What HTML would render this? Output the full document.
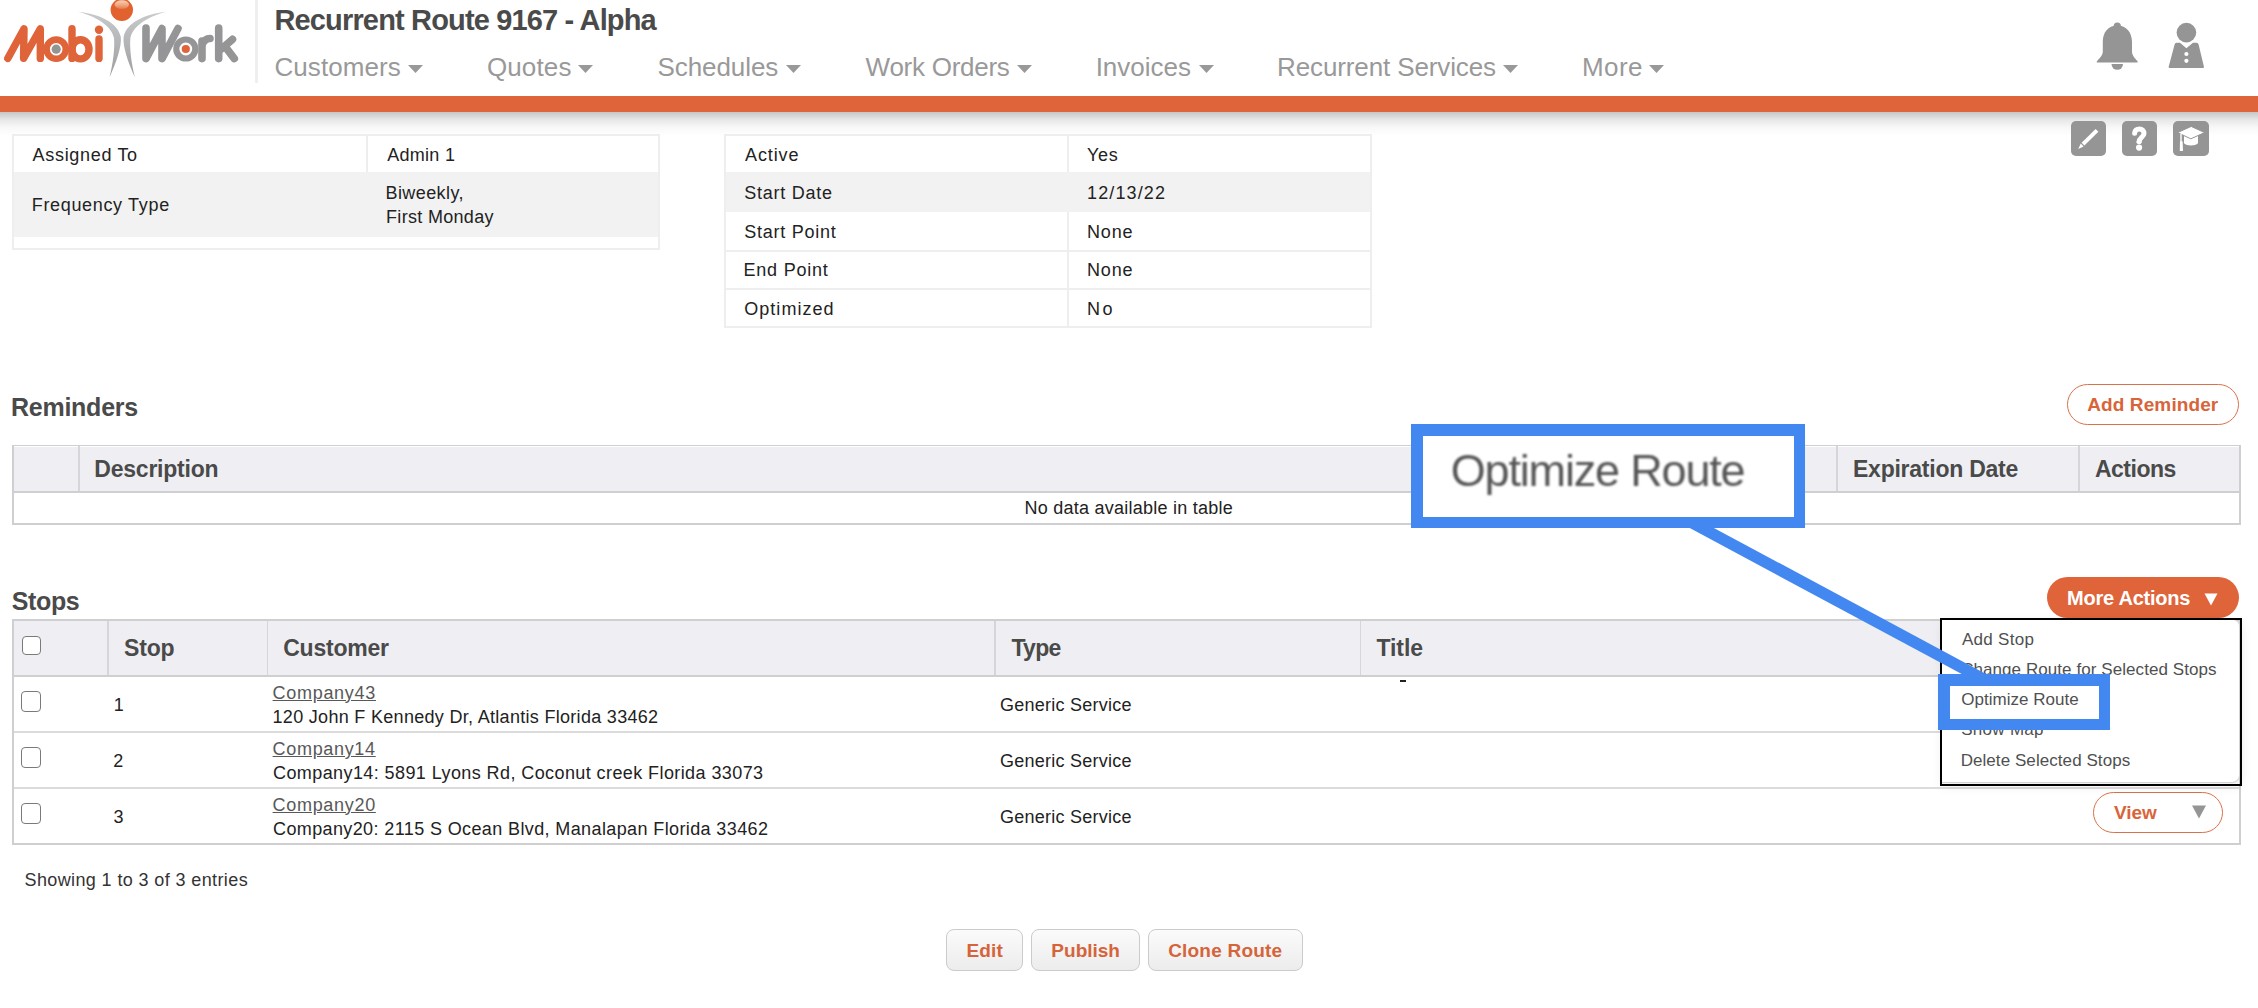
<!DOCTYPE html>
<html><head><meta charset="utf-8">
<style>
html,body{margin:0;padding:0;}
body{width:2258px;height:1008px;position:relative;overflow:hidden;background:#fff;font-family:"Liberation Sans",sans-serif;}
.t{position:absolute;white-space:nowrap;}
.nav{font-size:26px;line-height:26px;color:#999;}
.caret{display:inline-block;width:0;height:0;border-left:7.5px solid transparent;border-right:7.5px solid transparent;border-top:8px solid #999;margin-left:8px;vertical-align:3px;}
</style></head><body>
<svg style="position:absolute;left:0;top:0" width="255" height="90" viewBox="0 0 255 90">
<defs>
<linearGradient id="arm" x1="0" y1="0" x2="0" y2="1"><stop offset="0" stop-color="#c9cacc"/><stop offset="0.5" stop-color="#b3b4b6"/><stop offset="1" stop-color="#9c9d9f"/></linearGradient>
<linearGradient id="hl" x1="0" y1="0" x2="0" y2="1"><stop offset="0" stop-color="#f7d2b8"/><stop offset="0.6" stop-color="#f0a27a"/><stop offset="1" stop-color="#e8784a"/></linearGradient>
<radialGradient id="head" cx="0.5" cy="0.3" r="0.7"><stop offset="0" stop-color="#f2a27a"/><stop offset="0.45" stop-color="#e66a3c"/><stop offset="1" stop-color="#dc5f32"/></radialGradient>
</defs>
<g fill="none" stroke="#e0643a" stroke-width="7.4" stroke-linecap="round" stroke-linejoin="round">
<path d="M7.8,58.4 L24,28.8 L23.6,58.4 L40.3,28.8 L40.3,58.4"/>
<path d="M72,28.8 L72,58.4"/>
<ellipse cx="80.5" cy="49.3" rx="8.5" ry="9.6"/>
<path d="M99,39 L99,58.4"/>
</g>
<circle cx="56.2" cy="49.2" r="9.6" fill="none" stroke="#e0643a" stroke-width="6.6"/>
<circle cx="56.2" cy="49.2" r="4.6" fill="#949494"/>
<circle cx="99" cy="29.7" r="4.2" fill="#e0643a"/>
<circle cx="121.8" cy="9.8" r="11.2" fill="#e2622f"/><ellipse cx="121.8" cy="4.6" rx="7.2" ry="4.4" fill="url(#hl)"/>
<path d="M78.4,11.8 C100,14 118,23 120.8,37 C121.8,47 116,63 109.6,77.2 C113,63 115,48 114,38 C112,27 98,17 78.4,11.8 Z" fill="url(#arm)"/>
<path d="M166,11.8 C144.4,14 126.4,23 123.6,37 C122.6,47 128.4,63 134.8,77.2 C131.4,63 129.4,48 130.4,38 C132.4,27 146.4,17 166,11.8 Z" fill="url(#arm)"/>
<g fill="none" stroke="#959597" stroke-width="7.6" stroke-linecap="round" stroke-linejoin="round">
<path d="M146,28 L146,58.6 L162,28.5 L162,58.6 L178,28.5"/>
<path d="M202,58.6 L202,41 M202,45 C204,40 207,38.5 210,38.5"/>
<path d="M218.7,28 L218.7,58.6 M219,51 L232.5,39.3 M225,46.4 L234.3,58.6"/>
</g>
<circle cx="185.8" cy="49" r="9.5" fill="none" stroke="#959597" stroke-width="6.2"/>
<circle cx="185.8" cy="49" r="4.1" fill="#e0643a"/>
</svg>
<div style="position:absolute;left:255px;top:0px;width:3px;height:83px;background:#efefef"></div>
<div class="t" style="left:274.42px;top:6.25px;font-size:29px;line-height:29px;color:#4a4a4a;font-weight:bold;letter-spacing:-0.840px;">Recurrent Route 9167 - Alpha</div>
<div class="t" style="left:274.50px;top:53.89px;font-size:26px;line-height:26px;color:#999;font-weight:normal;letter-spacing:0.062px;">Customers</div>
<svg style="position:absolute;left:408px;top:65.2px" width="15" height="8" viewBox="0 0 15 8"><path d="M0,0 L15,0 L7.5,8 Z" fill="#999"/></svg>
<div class="t" style="left:486.93px;top:53.89px;font-size:26px;line-height:26px;color:#999;font-weight:normal;letter-spacing:0.126px;">Quotes</div>
<svg style="position:absolute;left:578.4px;top:65.2px" width="15" height="8" viewBox="0 0 15 8"><path d="M0,0 L15,0 L7.5,8 Z" fill="#999"/></svg>
<div class="t" style="left:657.53px;top:53.89px;font-size:26px;line-height:26px;color:#999;font-weight:normal;letter-spacing:-0.080px;">Schedules</div>
<svg style="position:absolute;left:786px;top:65.2px" width="15" height="8" viewBox="0 0 15 8"><path d="M0,0 L15,0 L7.5,8 Z" fill="#999"/></svg>
<div class="t" style="left:865.57px;top:53.89px;font-size:26px;line-height:26px;color:#999;font-weight:normal;letter-spacing:-0.256px;">Work Orders</div>
<svg style="position:absolute;left:1017.2px;top:65.2px" width="15" height="8" viewBox="0 0 15 8"><path d="M0,0 L15,0 L7.5,8 Z" fill="#999"/></svg>
<div class="t" style="left:1095.66px;top:53.89px;font-size:26px;line-height:26px;color:#999;font-weight:normal;letter-spacing:-0.010px;">Invoices</div>
<svg style="position:absolute;left:1199.1px;top:65.2px" width="15" height="8" viewBox="0 0 15 8"><path d="M0,0 L15,0 L7.5,8 Z" fill="#999"/></svg>
<div class="t" style="left:1277.12px;top:53.89px;font-size:26px;line-height:26px;color:#999;font-weight:normal;letter-spacing:-0.126px;">Recurrent Services</div>
<svg style="position:absolute;left:1503.3px;top:65.2px" width="15" height="8" viewBox="0 0 15 8"><path d="M0,0 L15,0 L7.5,8 Z" fill="#999"/></svg>
<div class="t" style="left:1581.92px;top:53.89px;font-size:26px;line-height:26px;color:#999;font-weight:normal;letter-spacing:0.467px;">More</div>
<svg style="position:absolute;left:1648.6px;top:65.2px" width="15" height="8" viewBox="0 0 15 8"><path d="M0,0 L15,0 L7.5,8 Z" fill="#999"/></svg>
<svg style="position:absolute;left:2094px;top:20px" width="46" height="52" viewBox="0 0 46 52">
<circle cx="23.3" cy="6.2" r="3.6" fill="#959595"/>
<path fill="#959595" d="M23.3,5.5 C32.5,5.5 38,12.5 38,22 L38,31.5 C38,35.5 41,38.5 43.6,41.2 L43.6,42.6 L2.8,42.6 L2.8,41.2 C5.5,38.5 8.8,35.5 8.8,31.5 L8.8,22 C8.8,12.5 14,5.5 23.3,5.5 Z"/>
<path fill="#959595" d="M17.5,44.1 A5.75,5.75 0 0 0 29,44.1 Z"/>
</svg>
<svg style="position:absolute;left:2166px;top:20px" width="42" height="52" viewBox="0 0 42 52">
<circle cx="20.4" cy="12.6" r="9.8" fill="#959595"/>
<path fill="#959595" d="M10.5,22.7 L14,22.7 L20.4,28.3 L27,22.7 L30.5,22.7 Q32.3,22.7 32.6,24.5 L38,47 Q38,48 37,48 L3.6,48 Q2.6,48 2.6,47 L8.6,24.5 Q8.9,22.7 10.5,22.7 Z"/>
<circle cx="20.4" cy="34" r="2.1" fill="#fff"/>
<circle cx="20.4" cy="40.8" r="2.1" fill="#fff"/>
</svg>
<div style="position:absolute;left:0px;top:96px;width:2258px;height:16px;background:#e0643a"></div>
<div style="position:absolute;left:0px;top:112px;width:2258px;height:24px;background:linear-gradient(#c6c6c6,#e9e9e9 35%,#f8f8f8 65%,#fff)"></div>
<div style="position:absolute;left:2071px;top:121px;width:35px;height:35px;background:#959595;border-radius:5px"></div>
<svg style="position:absolute;left:2071px;top:121px" width="35" height="35" viewBox="0 0 35 35">
<path fill="#fff" d="M24.6,8 L27.4,10.8 L13.4,24.6 L10.6,21.8 Z"/>
<path fill="#fff" d="M9.8,22.6 L12.6,25.4 L7.2,27.9 Z"/>
</svg><div style="position:absolute;left:2122px;top:121px;width:35px;height:35px;background:#959595;border-radius:5px"></div>
<svg style="position:absolute;left:2122px;top:121px" width="35" height="35" viewBox="0 0 35 35">
<path fill="none" stroke="#fff" stroke-width="5" stroke-linecap="round" d="M12.6,12.3 C12.6,9.2 14.8,7.9 17.4,7.9 C20.3,7.9 22,9.8 22,12.4 C22,16 17.1,16.6 17.1,20.8"/>
<path fill="none" stroke="#fff" stroke-width="5" d="M17.1,20 L17.1,22"/>
<circle cx="17.1" cy="26.6" r="3.1" fill="#fff"/>
</svg><div style="position:absolute;left:2173px;top:121px;width:36px;height:35px;background:#959595;border-radius:5px"></div>
<svg style="position:absolute;left:2173px;top:121px" width="36" height="35" viewBox="0 0 36 35">
<path fill="#fff" d="M11,14 L11,22.3 C14,25.3 22,25.3 25,22.3 L25,14 Z"/>
<path fill="#fff" stroke="#959595" stroke-width="1" d="M18.2,5.4 L31.6,11.6 L17.8,17.8 L4.6,11.6 Z"/>
<path fill="none" stroke="#fff" stroke-width="1.4" d="M8,12.6 L8,21"/>
<path fill="#fff" d="M7,20.2 L9.6,20.2 L10,30 L6.8,30 Z"/>
</svg><div style="position:absolute;left:12px;top:134px;width:648px;height:116px;border:2px solid #eeeeee;box-sizing:border-box;background:#fff"></div>
<div style="position:absolute;left:14px;top:172px;width:644px;height:65px;background:#f2f2f2"></div>
<div style="position:absolute;left:366px;top:136px;width:2px;height:36px;background:#eeeeee"></div>
<div class="t" style="left:32.60px;top:145.76px;font-size:18px;line-height:18px;color:#222;font-weight:normal;letter-spacing:0.678px;">Assigned To</div>
<div class="t" style="left:387.20px;top:145.76px;font-size:18px;line-height:18px;color:#222;font-weight:normal;letter-spacing:0.290px;">Admin 1</div>
<div class="t" style="left:31.76px;top:195.76px;font-size:18px;line-height:18px;color:#222;font-weight:normal;letter-spacing:0.665px;">Frequency Type</div>
<div class="t" style="left:385.56px;top:184.06px;font-size:18px;line-height:18px;color:#222;font-weight:normal;letter-spacing:0.407px;">Biweekly,</div>
<div class="t" style="left:386.06px;top:208.46px;font-size:18px;line-height:18px;color:#222;font-weight:normal;letter-spacing:0.309px;">First Monday</div>
<div style="position:absolute;left:724px;top:134px;width:648px;height:194px;border:2px solid #eeeeee;box-sizing:border-box;background:#fff"></div>
<div style="position:absolute;left:726px;top:172px;width:644px;height:40px;background:#f2f2f2"></div>
<div style="position:absolute;left:726px;top:250px;width:644px;height:2px;background:#eeeeee"></div>
<div style="position:absolute;left:726px;top:288px;width:644px;height:2px;background:#eeeeee"></div>
<div style="position:absolute;left:1067px;top:136px;width:2px;height:36px;background:#eeeeee"></div>
<div style="position:absolute;left:1067px;top:212px;width:2px;height:114px;background:#eeeeee"></div>
<div class="t" style="left:745.00px;top:145.76px;font-size:18px;line-height:18px;color:#222;font-weight:normal;letter-spacing:0.890px;">Active</div>
<div class="t" style="left:1087.05px;top:145.76px;font-size:18px;line-height:18px;color:#222;font-weight:normal;letter-spacing:0.620px;">Yes</div>
<div class="t" style="left:744.19px;top:184.26px;font-size:18px;line-height:18px;color:#222;font-weight:normal;letter-spacing:0.747px;">Start Date</div>
<div class="t" style="left:1087.05px;top:184.26px;font-size:18px;line-height:18px;color:#222;font-weight:normal;letter-spacing:1.119px;">12/13/22</div>
<div class="t" style="left:744.19px;top:222.76px;font-size:18px;line-height:18px;color:#222;font-weight:normal;letter-spacing:0.743px;">Start Point</div>
<div class="t" style="left:1086.96px;top:222.76px;font-size:18px;line-height:18px;color:#222;font-weight:normal;letter-spacing:0.877px;">None</div>
<div class="t" style="left:743.56px;top:261.26px;font-size:18px;line-height:18px;color:#222;font-weight:normal;letter-spacing:0.775px;">End Point</div>
<div class="t" style="left:1086.96px;top:261.26px;font-size:18px;line-height:18px;color:#222;font-weight:normal;letter-spacing:0.877px;">None</div>
<div class="t" style="left:744.19px;top:299.76px;font-size:18px;line-height:18px;color:#222;font-weight:normal;letter-spacing:1.047px;">Optimized</div>
<div class="t" style="left:1086.96px;top:299.76px;font-size:18px;line-height:18px;color:#222;font-weight:normal;letter-spacing:2.510px;">No</div>
<div class="t" style="left:10.97px;top:394.84px;font-size:25px;line-height:25px;color:#4a4a4a;font-weight:bold;letter-spacing:-0.250px;">Reminders</div>
<div style="position:absolute;left:2067px;top:384px;width:172px;height:41px;box-sizing:border-box;border:1.5px solid #d9714a;border-radius:21px;background:#fff"></div>
<div class="t" style="left:2087.22px;top:394.92px;font-size:19px;line-height:19px;color:#d9643a;font-weight:bold;letter-spacing:0.109px;">Add Reminder</div>
<div style="position:absolute;left:12px;top:445px;width:2229px;height:80px;border:2px solid #cfcfd2;border-top-width:1.5px;box-sizing:border-box;background:#fff"></div>
<div style="position:absolute;left:14px;top:446.5px;width:2225px;height:45px;background:#efeff3"></div>
<div style="position:absolute;left:12px;top:491px;width:2229px;height:2px;background:#cfcfd2"></div>
<div style="position:absolute;left:78px;top:446px;width:1.5px;height:45px;background:#d6d6da"></div>
<div style="position:absolute;left:1836px;top:446px;width:1.5px;height:45px;background:#d6d6da"></div>
<div style="position:absolute;left:2078px;top:446px;width:1.5px;height:45px;background:#d6d6da"></div>
<div class="t" style="left:94.30px;top:458.03px;font-size:23px;line-height:23px;color:#4a4a4a;font-weight:bold;letter-spacing:-0.223px;">Description</div>
<div class="t" style="left:1853.01px;top:458.03px;font-size:23px;line-height:23px;color:#4a4a4a;font-weight:bold;letter-spacing:-0.243px;">Expiration Date</div>
<div class="t" style="left:2094.93px;top:458.03px;font-size:23px;line-height:23px;color:#4a4a4a;font-weight:bold;letter-spacing:-0.483px;">Actions</div>
<div class="t" style="left:1024.56px;top:498.76px;font-size:18px;line-height:18px;color:#222;font-weight:normal;letter-spacing:0.244px;">No data available in table</div>
<div class="t" style="left:11.75px;top:588.84px;font-size:25px;line-height:25px;color:#4a4a4a;font-weight:bold;letter-spacing:-0.356px;">Stops</div>
<div style="position:absolute;left:12px;top:619px;width:2229px;height:226px;border:2px solid #cfcfd2;box-sizing:border-box;background:#fff"></div>
<div style="position:absolute;left:14px;top:621px;width:2225px;height:54px;background:#efeff3"></div>
<div style="position:absolute;left:12px;top:675px;width:2229px;height:2px;background:#cfcfd2"></div>
<div style="position:absolute;left:107px;top:621px;width:1.5px;height:54px;background:#d6d6da"></div>
<div style="position:absolute;left:266.5px;top:621px;width:1.5px;height:54px;background:#d6d6da"></div>
<div style="position:absolute;left:994px;top:621px;width:1.5px;height:54px;background:#d6d6da"></div>
<div style="position:absolute;left:1359.5px;top:621px;width:1.5px;height:54px;background:#d6d6da"></div>
<div style="position:absolute;left:14px;top:731px;width:2225px;height:1.5px;background:#dcdcdc"></div>
<div style="position:absolute;left:14px;top:787px;width:2225px;height:1.5px;background:#dcdcdc"></div>
<div class="t" style="left:124.01px;top:636.83px;font-size:23px;line-height:23px;color:#4a4a4a;font-weight:bold;letter-spacing:-0.183px;">Stop</div>
<div class="t" style="left:283.18px;top:636.83px;font-size:23px;line-height:23px;color:#4a4a4a;font-weight:bold;letter-spacing:-0.221px;">Customer</div>
<div class="t" style="left:1011.57px;top:636.83px;font-size:23px;line-height:23px;color:#4a4a4a;font-weight:bold;letter-spacing:-0.782px;">Type</div>
<div class="t" style="left:1376.57px;top:636.83px;font-size:23px;line-height:23px;color:#4a4a4a;font-weight:bold;letter-spacing:-0.118px;">Title</div>
<div style="position:absolute;left:22px;top:636px;width:19px;height:19px;border:1.5px solid #7a7a7a;border-radius:4px;box-sizing:border-box;background:#fff"></div>
<div style="position:absolute;left:20.5px;top:691px;width:20.5px;height:20.5px;border:1.5px solid #7a7a7a;border-radius:4px;box-sizing:border-box;background:#fff"></div>
<div class="t" style="left:113.65px;top:695.76px;font-size:18px;line-height:18px;color:#222;font-weight:normal;letter-spacing:0.000px;">1</div>
<div class="t" style="left:272.60px;top:683.76px;font-size:18px;line-height:18px;color:#585858;font-weight:normal;letter-spacing:0.700px;"><span style="text-decoration:underline">Company43</span></div>
<div class="t" style="left:272.55px;top:707.76px;font-size:18px;line-height:18px;color:#222;font-weight:normal;letter-spacing:0.303px;">120 John F Kennedy Dr, Atlantis Florida 33462</div>
<div class="t" style="left:1000.10px;top:695.76px;font-size:18px;line-height:18px;color:#222;font-weight:normal;letter-spacing:0.246px;">Generic Service</div>
<div style="position:absolute;left:20.5px;top:747px;width:20.5px;height:20.5px;border:1.5px solid #7a7a7a;border-radius:4px;box-sizing:border-box;background:#fff"></div>
<div class="t" style="left:113.30px;top:751.76px;font-size:18px;line-height:18px;color:#222;font-weight:normal;letter-spacing:0.000px;">2</div>
<div class="t" style="left:272.60px;top:739.76px;font-size:18px;line-height:18px;color:#585858;font-weight:normal;letter-spacing:0.677px;"><span style="text-decoration:underline">Company14</span></div>
<div class="t" style="left:273.00px;top:763.76px;font-size:18px;line-height:18px;color:#222;font-weight:normal;letter-spacing:0.413px;">Company14: 5891 Lyons Rd, Coconut creek Florida 33073</div>
<div class="t" style="left:1000.10px;top:751.76px;font-size:18px;line-height:18px;color:#222;font-weight:normal;letter-spacing:0.246px;">Generic Service</div>
<div style="position:absolute;left:20.5px;top:803px;width:20.5px;height:20.5px;border:1.5px solid #7a7a7a;border-radius:4px;box-sizing:border-box;background:#fff"></div>
<div class="t" style="left:113.48px;top:807.76px;font-size:18px;line-height:18px;color:#222;font-weight:normal;letter-spacing:0.000px;">3</div>
<div class="t" style="left:272.60px;top:795.76px;font-size:18px;line-height:18px;color:#585858;font-weight:normal;letter-spacing:0.689px;"><span style="text-decoration:underline">Company20</span></div>
<div class="t" style="left:273.00px;top:819.76px;font-size:18px;line-height:18px;color:#222;font-weight:normal;letter-spacing:0.384px;">Company20: 2115 S Ocean Blvd, Manalapan Florida 33462</div>
<div class="t" style="left:1000.10px;top:807.76px;font-size:18px;line-height:18px;color:#222;font-weight:normal;letter-spacing:0.246px;">Generic Service</div>
<div style="position:absolute;left:1400px;top:680px;width:6px;height:2px;background:#222"></div>
<div style="position:absolute;left:2093px;top:792px;width:130px;height:41px;box-sizing:border-box;border:1.5px solid #d9714a;border-radius:21px;background:#fff"></div>
<div class="t" style="left:2113.91px;top:802.72px;font-size:19px;line-height:19px;color:#d9643a;font-weight:bold;letter-spacing:-0.047px;">View</div>
<svg style="position:absolute;left:2191px;top:805px" width="16" height="14" viewBox="0 0 16 14"><path d="M1,0.5 L15,0.5 L8,13.5 Z" fill="#959595"/></svg>
<div style="position:absolute;left:2047px;top:577px;width:192px;height:41px;border-radius:21px;background:#e0643a"></div>
<div class="t" style="left:2067.00px;top:588.27px;font-size:20px;line-height:20px;color:#fff;font-weight:bold;letter-spacing:-0.236px;">More Actions</div>
<svg style="position:absolute;left:2204px;top:593px" width="14" height="13" viewBox="0 0 14 13"><path d="M0.5,0.5 L13.5,0.5 L7,12.5 Z" fill="#fff"/></svg>
<div style="position:absolute;left:1940px;top:619px;width:299.5px;height:164px;border:1px solid #d2d2d2;border-left:none;border-radius:0 7px 8px 0;box-sizing:border-box;background:#fff;box-shadow:2px 3px 12px rgba(0,0,0,0.08)"></div>
<div style="position:absolute;left:1940px;top:618px;width:302px;height:167.5px;border:2.5px solid #000;box-sizing:border-box"></div>
<div class="t" style="left:1962.00px;top:631.11px;font-size:17px;line-height:17px;color:#505050;font-weight:normal;letter-spacing:0.275px;">Add Stop</div>
<div class="t" style="left:1961.15px;top:661.21px;font-size:17px;line-height:17px;color:#505050;font-weight:normal;letter-spacing:0.072px;">Change Route for Selected Stops</div>
<div class="t" style="left:1961.23px;top:691.31px;font-size:17px;line-height:17px;color:#505050;font-weight:normal;letter-spacing:0.023px;">Optimize Route</div>
<div class="t" style="left:1961.23px;top:721.41px;font-size:17px;line-height:17px;color:#505050;font-weight:normal;letter-spacing:0.289px;">Show Map</div>
<div class="t" style="left:1960.64px;top:751.51px;font-size:17px;line-height:17px;color:#505050;font-weight:normal;letter-spacing:0.067px;">Delete Selected Stops</div>
<div class="t" style="left:24.49px;top:871.46px;font-size:18px;line-height:18px;color:#333;font-weight:normal;letter-spacing:0.385px;">Showing 1 to 3 of 3 entries</div>
<div style="position:absolute;left:946px;top:929px;width:77px;height:42px;box-sizing:border-box;border:1px solid #cbcbcb;border-radius:8px;background:linear-gradient(#fbfbfb,#ececec)"></div>
<div class="t" style="left:966.47px;top:940.72px;font-size:19px;line-height:19px;color:#d6643a;font-weight:bold;letter-spacing:0.137px;">Edit</div>
<div style="position:absolute;left:1031px;top:929px;width:109px;height:42px;box-sizing:border-box;border:1px solid #cbcbcb;border-radius:8px;background:linear-gradient(#fbfbfb,#ececec)"></div>
<div class="t" style="left:1051.37px;top:940.72px;font-size:19px;line-height:19px;color:#d6643a;font-weight:bold;letter-spacing:-0.002px;">Publish</div>
<div style="position:absolute;left:1148px;top:929px;width:155px;height:42px;box-sizing:border-box;border:1px solid #cbcbcb;border-radius:8px;background:linear-gradient(#fbfbfb,#ececec)"></div>
<div class="t" style="left:1168.14px;top:940.72px;font-size:19px;line-height:19px;color:#d6643a;font-weight:bold;letter-spacing:0.211px;">Clone Route</div>
<svg style="position:absolute;left:0;top:0" width="2258" height="1008" viewBox="0 0 2258 1008">
<line x1="1683.2" y1="518" x2="1985" y2="680" stroke="#4387f0" stroke-width="11.5"/>
</svg>
<div style="position:absolute;left:1411px;top:424px;width:394px;height:104px;border:12px solid #4387f0;border-right-width:11px;border-bottom-width:11px;box-sizing:border-box;background:#fff"></div>
<div class="t" style="left:1450.77px;top:447.71px;font-size:45px;line-height:45px;color:#555;font-weight:normal;letter-spacing:-1.177px;filter:blur(0.9px)">Optimize Route</div>
<div style="position:absolute;left:1938px;top:674px;width:172px;height:56px;border:12px solid #4387f0;border-right-width:11px;border-bottom-width:11px;box-sizing:border-box"></div>
</body></html>
